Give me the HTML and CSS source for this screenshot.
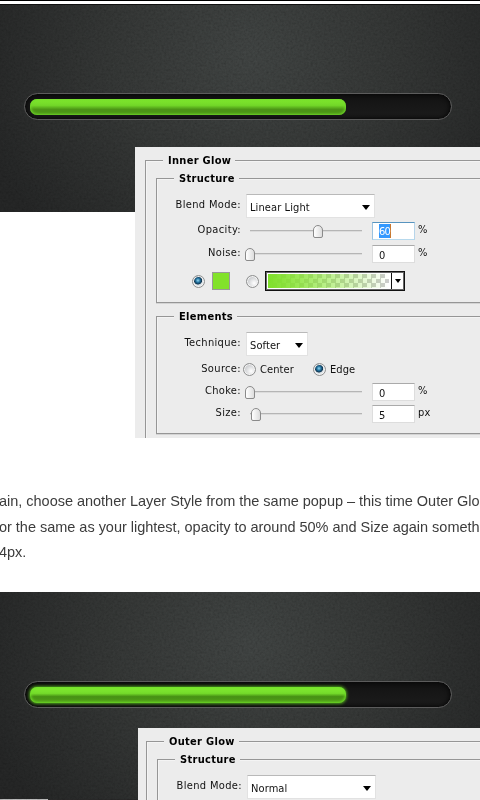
FILE: index.html
```html
<!DOCTYPE html>
<html lang="en">
<head>
    <meta charset="UTF-8">
    <meta name="viewport" content="width=device-width, initial-scale=1.0">
    <title>Progress Bar Tutorial</title>
    <link rel="stylesheet" href="styles.css">
</head>
<body>
    <div class="previous"></div>

    <div class="step">
        <div class="canvas">
            <svg class="grain" width="480" height="208">
                <filter id="noise">
                    <feTurbulence type="fractalNoise" baseFrequency="0.45" numOctaves="2" seed="4"/>
                    <feColorMatrix type="saturate" values="0"/>
                    <feComponentTransfer><feFuncA type="linear" slope="0" intercept="1"/></feComponentTransfer>
                </filter>
                <rect width="480" height="208" filter="url(#noise)"/>
            </svg>
            <div class="track"><div class="fill"></div></div>
        </div>

        <div class="panel">
            <div class="group outer">
                <div class="legend">Inner Glow</div>
                <div class="group structure">
                    <div class="legend">Structure</div>
                    <div class="row blend">
                        <label>Blend Mode:</label>
                        <div class="select wide">Linear Light<i class="arrow"></i></div>
                    </div>
                    <div class="row">
                        <label>Opacity:</label>
                        <div class="slider"><i class="thumb mid"></i></div>
                        <div class="input focus"><span>60</span></div>
                        <span class="unit">%</span>
                    </div>
                    <div class="row">
                        <label>Noise:</label>
                        <div class="slider"><i class="thumb"></i></div>
                        <div class="input">0</div>
                        <span class="unit">%</span>
                    </div>
                    <div class="row colors">
                        <i class="radio on"></i>
                        <i class="swatch"></i>
                        <i class="radio"></i>
                        <div class="gradient"><div class="ramp"></div><div class="drop"><i class="arrow small"></i></div></div>
                    </div>
                </div>
                <div class="group elements">
                    <div class="legend">Elements</div>
                    <div class="row technique">
                        <label>Technique:</label>
                        <div class="select">Softer<i class="arrow"></i></div>
                    </div>
                    <div class="row source">
                        <label>Source:</label>
                        <i class="radio"></i><span class="option center">Center</span>
                        <i class="radio on"></i><span class="option">Edge</span>
                    </div>
                    <div class="row choke">
                        <label>Choke:</label>
                        <div class="slider"><i class="thumb"></i></div>
                        <div class="input">0</div>
                        <span class="unit">%</span>
                    </div>
                    <div class="row">
                        <label>Size:</label>
                        <div class="slider"><i class="thumb low"></i></div>
                        <div class="input">5</div>
                        <span class="unit">px</span>
                    </div>
                </div>
            </div>
        </div>
    </div>

    <p class="text">
        <span class="line">ain, choose another Layer Style from the same popup – this time Outer Glo</span>
        <span class="line">or the same as your lightest, opacity to around 50% and Size again someth</span>
        <span class="line">4px.</span>
    </p>

    <div class="step second">
        <div class="canvas">
            <svg class="grain" width="480" height="208"><rect width="480" height="208" filter="url(#noise)"/></svg>
            <div class="track"><div class="fill glow"></div></div>
        </div>

        <div class="panel">
            <div class="group outer">
                <div class="legend">Outer Glow</div>
                <div class="group structure">
                    <div class="legend">Structure</div>
                    <div class="row blend">
                        <label>Blend Mode:</label>
                        <div class="select wide">Normal<i class="arrow"></i></div>
                    </div>
                </div>
            </div>
        </div>
    </div>
</body>
</html>
```
FILE: styles.css
```css
* {
    box-sizing: border-box;
}
html, body {
    height: 800px;
    overflow: hidden;
}
body {
    margin: 0;
    background: #fff;
}
.previous {
    height: 4px;
    border-top: 1px solid #000;
    background: #fff;
}

/* dark picture with the bar */
.step {
    height: 434px;
    overflow: hidden;
}
.canvas {
    position: relative;
    height: 208px;
    padding: 88px 0 0 24px;
    border-top: 1px solid #111;
    background: radial-gradient(ellipse 280px 250px at 250px 50px, #363938, #2c2e2d 50%, #1f2020 100%);
}
.grain {
    position: absolute;
    top: 0;
    left: 0;
    opacity: 0.3;
    mix-blend-mode: overlay;
}
.track {
    position: relative;
    width: 428px;
    height: 27px;
    padding: 5px;
    border: 1px solid #5c5c5c;
    border-radius: 14px;
    background: linear-gradient(#121212, #1c1c1c);
    box-shadow: inset 0 0 4px 1px #060606;
}
.fill {
    width: 316px;
    height: 16px;
    border-radius: 7px;
    background: linear-gradient(#82ea30, #72d728 40%, #4c9516 65%, #4a9016);
    box-shadow: inset 0 0 3px 1px #71db2a;
}
.fill.glow {
    background: linear-gradient(#84ef33, #74db2a 40%, #479114 60%, #509d19);
    box-shadow: inset 0 0 3px 1px #6fe028, 0 0 3px 1px #4a9b1b;
}

/* layer style dialog */
.panel {
    position: relative;
    width: 400px;
    height: 291px;
    margin: -65px 0 0 135px;
    padding: 13px 0 0 10px;
    overflow: hidden;
    background: #ececec;
    font: 11px "DejaVu Sans Condensed", "DejaVu Sans", sans-serif;
    letter-spacing: 0.1px;
    color: #111;
}
.group {
    border: 1px solid #969696;
    box-shadow: inset 1px 1px #f4f4f4, 0 1px #d4d4d4;
}
.outer {
    height: 300px;
}
.legend {
    width: max-content;
    height: 14px;
    margin: -8px 0 0 17px;
    padding: 1px 4px 0 5px;
    background: #ececec;
    font-weight: bold;
    line-height: 14px;
    letter-spacing: 0.3px;
    color: #000;
}
.structure {
    height: 125px;
    margin: 11px 0 0 10px;
}
.elements {
    height: 118px;
    margin: 13px 0 0 10px;
}
.row {
    display: flex;
    align-items: center;
    height: 23px;
}
.row label {
    width: 84px;
    margin-top: -2px;
    text-align: right;
    letter-spacing: 0.35px;
}
.blend {
    height: 24px;
    margin: 9px 0 1px;
}
.blend label, .technique label {
    margin-top: -4px;
}
.select {
    display: flex;
    align-items: center;
    justify-content: space-between;
    width: 62px;
    height: 24px;
    margin-left: 5px;
    padding: 2px 4px 0 3px;
    border: 1px solid #e2e2e2;
    border-top-color: #b9b9b9;
    background: #fff;
}
.wide {
    width: 129px;
}
.arrow {
    border: 4px solid transparent;
    border-top: 5px solid #000;
    border-bottom: 0;
}
.arrow.small {
    border-width: 4px 3px 0;
}
.slider {
    width: 112px;
    height: 2px;
    margin-left: 9px;
    background: #b5b5b5;
    border-bottom: 1px solid #dcdcdc;
}
.thumb {
    display: block;
    width: 10px;
    height: 13px;
    margin: -5px 0 0 -5px;
    border: 1px solid #8a8a8a;
    border-radius: 5px 5px 2px 2px;
    background: linear-gradient(90deg, #fff, #ddd);
}
.thumb.mid {
    margin-left: 63px;
}
.thumb.low {
    margin-left: 1px;
}
.input {
    width: 43px;
    height: 18px;
    margin-left: 10px;
    padding: 2px 0 0 6px;
    border: 1px solid #ddd;
    border-top-color: #aaa;
    background: #fff;
    line-height: 15px;
}
.input.focus {
    border-color: #5794bf #b7d5ea #b7d9ed #9dc3df;
    padding-top: 1px;
}
.input.focus span {
    display: inline-block;
    height: 14px;
    line-height: 15px;
    background: #3399ff;
    color: #fff;
    border-right: 1px solid #c87830;
    letter-spacing: -0.7px;
}
.unit {
    margin: -3px 0 0 3px;
}
.radio {
    width: 13px;
    height: 13px;
    border: 1px solid #8e8f8f;
    border-radius: 50%;
    background: radial-gradient(circle at 65% 65%, #fff, #c4c6c9 75%);
    box-shadow: inset 0 0 0 1px #f4f4f4;
}
.radio.on {
    background: radial-gradient(circle at 45% 40%, #8fd8f5 0, #1f6c98 25%, #12354f 42%, #dce2e6 50%);
}
.colors {
    height: 32px;
    padding-left: 35px;
}
.swatch {
    width: 18px;
    height: 18px;
    margin: 0 16px 0 7px;
    border: 1px solid #999;
    background: #82e22a;
}
.gradient {
    display: flex;
    width: 140px;
    height: 20px;
    margin-left: 6px;
    border: 1px solid #111;
    outline: 1px solid #666;
    outline-offset: -2px;
    background: #fff;
}
.ramp {
    flex: 1;
    margin: 2px;
    background:
        linear-gradient(90deg, #7fe02a, #82e22acc 25%, #82e22a00),
        repeating-conic-gradient(#ccc 0 25%, #fff 0 50%) 0 0 / 9px 9px;
}
.drop {
    display: flex;
    align-items: center;
    justify-content: center;
    width: 13px;
    border-left: 1px solid #111;
}
.technique {
    height: 24px;
    margin: 9px 0 2px;
}
.source {
    height: 23px;
}
.source .radio {
    margin-left: 2px;
}
.option {
    margin-left: 4px;
}
.option.center {
    width: 51px;
}
.choke {
    height: 21px;
}

/* article text */
.text {
    height: 154px;
    margin: 0 0 0 -1px;
    padding-top: 51px;
    overflow: hidden;
    font: 14.5px/25.5px "Liberation Sans", Arial, sans-serif;
    letter-spacing: -0.02px;
    color: #3c3c3c;
}
.line {
    display: block;
    height: 25.5px;
    white-space: nowrap;
}

.second {
    height: 208px;
    background: #222;
}
.second .panel {
    height: 72px;
    margin: -72px 0 0 138px;
    padding-left: 8px;
}
.second .canvas {
    border-bottom: 1px solid #222;
    border-image: linear-gradient(90deg, #aaa 49px, #222 49px) 1;
    border-width: 0 0 1px;
    padding-top: 89px;
}
```
